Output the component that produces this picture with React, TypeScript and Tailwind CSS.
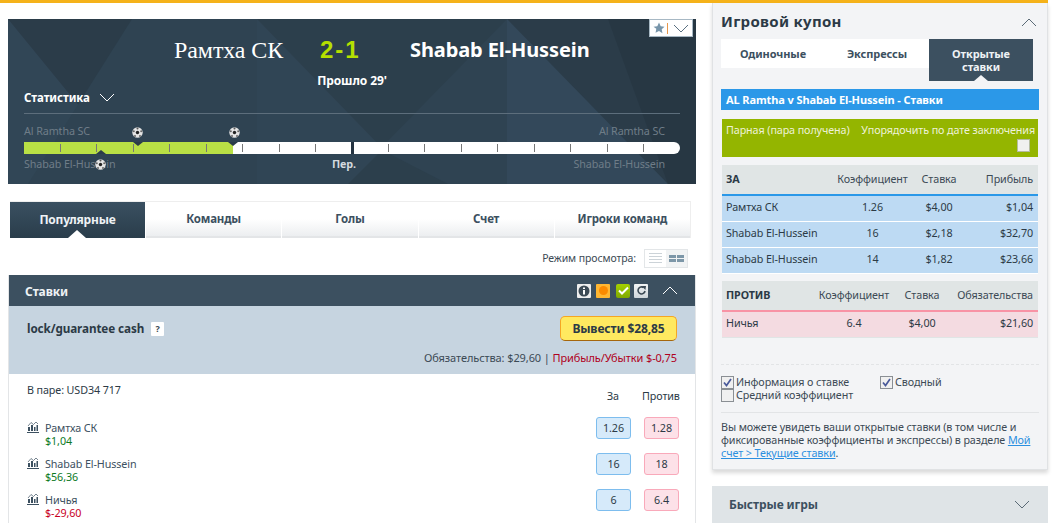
import React from 'react';

const ticks = [52, 88, 125, 161, 198, 234, 271, 307, 380, 416, 453, 489, 526, 562, 599, 635];

const Chevron: React.FC<{ up?: boolean; className?: string }> = ({ up, className }) => (
  <svg width="16" height="9" viewBox="0 0 16 9" fill="none" className={className}>
    <path d={up ? 'M1 8 L8 1 L15 8' : 'M1 1 L8 8 L15 1'} stroke="currentColor" strokeWidth="1" />
  </svg>
);

const Ball: React.FC<{ className: string }> = ({ className }) => (
  <svg width="11" height="11" viewBox="0 0 11 11" className={`absolute ${className}`}>
    <circle cx="5.5" cy="5.5" r="5.2" fill="#e4e4e4" />
    <circle cx="5.5" cy="5.5" r="1.7" fill="#222" />
    <circle cx="5.5" cy="1.5" r="1" fill="#555" />
    <circle cx="1.8" cy="4.2" r="1" fill="#666" />
    <circle cx="9.2" cy="4.2" r="1" fill="#666" />
    <circle cx="3" cy="9" r="1" fill="#666" />
    <circle cx="8" cy="9" r="1" fill="#666" />
  </svg>
);

const BarsIcon: React.FC = () => (
  <svg width="12" height="12" viewBox="0 0 12 12" className="-mt-[1px] shrink-0 text-[#3c5060]">
    <path d="M1 5 L4 1.5 L6.5 3.5 L9 1 L11 3" fill="none" stroke="currentColor" strokeWidth="0.7" />
    <path d="M1 6h2v4H1zM4 4h2v6H4zM7 6h1.5v4H7zM9.5 4H11v6H9.5z" fill="currentColor" />
    <path d="M0 11.5h12" stroke="currentColor" strokeWidth="1" />
  </svg>
);

const Market: React.FC<{ name: string; value: string; red?: boolean; back: string; lay: string }> = ({ name, value, red, back, lay }) => (
  <div className="flex h-[36px] items-start">
    <div className="ml-[18px] flex w-[569px] gap-[6px]">
      <BarsIcon />
      <div className="leading-[13px]">
        <div className="text-[#3c5060]">{name}</div>
        <div className={red ? 'text-[#c8001e]' : 'text-[#0d7a1f]'}>{value}</div>
      </div>
    </div>
    <div className="-mt-[5px] flex h-[22px] w-[35px] items-center justify-center rounded-[3px] border border-[#7dbdee] bg-[#d6eafa] text-[#2c3a46]">{back}</div>
    <div className="-mt-[5px] ml-[13px] flex h-[22px] w-[35px] items-center justify-center rounded-[3px] border border-[#f9a9ba] bg-[#fde1e8] text-[#2c3a46]">{lay}</div>
  </div>
);

const BetRow: React.FC<{ name: string; odds: string; stake: string; profit: string }> = ({ name, odds, stake, profit }) => (
  <div className="grid h-[26px] grid-cols-[109px_75px_58px_1fr] items-center border-b border-white bg-[#bddaf3] pb-[3px] pl-[4px] pr-[5px] text-[#2c3a46]">
    <span>{name}</span>
    <span className="text-center">{odds}</span>
    <span className="text-center">{stake}</span>
    <span className="text-right">{profit}</span>
  </div>
);

const CheckBox: React.FC<{ checked?: boolean }> = ({ checked }) => (
  <span className="flex h-[13px] w-[13px] shrink-0 items-center justify-center border border-[#8a8f94] bg-[#f0f0f0]">
    {checked && (
      <svg width="9" height="9" viewBox="0 0 9 9">
        <path d="M1 4.5 L3.5 7.5 L8 1" fill="none" stroke="#4a5a9a" strokeWidth="1.7" />
      </svg>
    )}
  </span>
);

export default function App() {
  return (
    <div className="h-[523px] w-[1062px] overflow-hidden bg-white font-['Noto_Sans',sans-serif] text-[10.75px] leading-[13px] tracking-[-0.1px]">
      <div className="h-[3px] w-[1048px] bg-[#f5b21a]" />
      <div className="flex">
        {/* Left column */}
        <div className="ml-[8px] w-[688px]">
          {/* Match header */}
          <div className="relative mt-[16px] h-[165px] overflow-hidden bg-[#2b3c49]">
            <svg className="absolute inset-0" width="688" height="165" viewBox="0 0 688 165">
              <polygon points="0,0 135,165 0,165" fill="#33495a" opacity="0.8" />
              <polygon points="124,0 249,0 249,165 100,165 20,165" fill="#2f4352" />
              <polygon points="249,0 375,130 340,165 249,165" fill="#33485a" />
              <polygon points="249,0 499,0 499,165 249,165" fill="#2e4150" opacity="0.5" />
              <polygon points="499,0 372,130 440,165 499,165" fill="#2f4352" />
              <polygon points="499,0 660,165 499,165" fill="#33485a" />
              <polygon points="600,0 688,0 688,165 660,165" fill="#273743" />
            </svg>
            <div className="absolute right-[3px] top-0 flex h-[18px] w-[44px] items-center border border-[#a7b8c4] bg-white pl-[3px]">
              <svg width="12" height="12" viewBox="0 0 24 24" fill="#7795aa">
                <path d="M12 1l3.4 7.3 7.6 1-5.6 5.3 1.5 7.9L12 18l-6.9 3.5 1.5-7.9L1 9.3l7.6-1z" />
              </svg>
              <span className="ml-[2px] h-[11px] w-px bg-[#e8974a]" />
              <Chevron className="ml-[5px] text-[#5a7081]" />
            </div>
            <div className="relative flex h-[55px] items-start pt-[17px]">
              <span className="ml-[166px] w-[146px] font-['Liberation_Serif',serif] text-[24px] leading-[28px] text-white">Рамтха СК</span>
              <span className="w-[90px] font-['Liberation_Sans',sans-serif] text-[24px] font-bold leading-[28px] tracking-[2px] text-[#b5e000]">2-1</span>
              <span className="text-[20px] font-bold leading-[28px] text-white">Shabab El-Hussein</span>
            </div>
            <div className="relative text-center text-[12px] font-bold text-white">Прошло 29'</div>
            <div className="relative ml-[16px] mt-[4px] flex h-[13px] items-center gap-[9px] text-[11.5px] font-bold text-white">
              Статистика
              <Chevron className="text-white" />
            </div>
            <div className="relative mx-[16px] mt-[9px] h-px bg-[#5d6e7c]" />
            <div className="relative mx-[16px] mt-[11px] flex justify-between text-[#6f7d88]">
              <span>Al Ramtha SC</span>
              <span className="mr-[15px]">Al Ramtha SC</span>
            </div>
            {/* Timeline */}
            <div className="relative mx-[16px] mt-[4px] h-[12px] rounded-r-[6px] bg-white">
              <div className="absolute inset-y-0 left-0 w-[209px] bg-[#b9e045]" />
              {ticks.map(x => (
                <div key={x} className="absolute top-[2px] h-[8px] w-px bg-[#777]" style={{ left: x - 16 }} />
              ))}
              <div className="absolute inset-y-0 left-[327px] w-[3px] bg-[#243341]" />
              <div className="absolute left-[109px] top-0 h-0 w-0 border-x-[5px] border-t-[4px] border-x-transparent border-t-[#2b3c49]" />
              <div className="absolute left-[204px] top-0 h-0 w-0 border-x-[5px] border-t-[4px] border-x-transparent border-t-[#2b3c49]" />
              <div className="absolute bottom-0 left-[72px] h-0 w-0 border-x-[5px] border-b-[4px] border-x-transparent border-b-[#2b3c49]" />
            </div>
            <div className="relative mx-[16px] mt-[4px] flex text-[#6f7d88]">
              <span className="w-[308px]">Shabab El-Hussein</span>
              <span className="font-bold text-[#d5dadf]">Пер.</span>
              <span className="ml-auto mr-[15px]">Shabab El-Hussein</span>
            </div>
            <Ball className="left-[124px] top-[108px]" />
            <Ball className="left-[221px] top-[108px]" />
            <Ball className="left-[87px] top-[140px]" />
          </div>

          {/* Tabs */}
          <div className="ml-[2px] mt-[17px] flex h-[37px] w-[681px] gap-px border-r border-t border-[#eeeeee] text-[11.5px] font-bold tracking-[-0.2px] text-[#3c5060]">
            <div className="relative flex w-[135px] items-center justify-center bg-gradient-to-b from-[#3a5061] to-[#2a3d4b] pb-[2px] text-[12px] text-[#eef2f5]">
              Популярные
              <div className="absolute bottom-0 left-[58px] h-0 w-0 border-x-[9px] border-b-[8px] border-x-transparent border-b-white" />
            </div>
            {['Команды', 'Голы', 'Счет', 'Игроки команд'].map(t => (
              <div key={t} className="flex flex-1 items-center justify-center border-b-2 border-[#e3e5e7] bg-gradient-to-b from-white from-50% to-[#eceef0] pb-[2px]">
                {t}
              </div>
            ))}
          </div>

          {/* View mode */}
          <div className="mt-[10px] flex h-[20px] items-center justify-end pr-[8px] text-[10.5px] text-[#3c4a55]">
            Режим просмотра:
            <div className="ml-[8px] flex h-[19px] w-[44px] border border-[#e3e6e8]">
              <div className="flex flex-1 flex-col items-center justify-center gap-[2px]">
                <span className="h-px w-[13px] bg-[#ccd3d8]" />
                <span className="h-px w-[13px] bg-[#ccd3d8]" />
                <span className="h-px w-[13px] bg-[#ccd3d8]" />
                <span className="h-px w-[13px] bg-[#ccd3d8]" />
              </div>
              <div className="grid flex-1 grid-cols-[7px_7px] content-center justify-center gap-[1px] bg-[#f1f3f4]">
                <span className="h-[3px] bg-[#7d97a8]" />
                <span className="h-[3px] bg-[#7d97a8]" />
                <span className="h-[3px] bg-[#7d97a8]" />
                <span className="h-[3px] bg-[#7d97a8]" />
              </div>
            </div>
          </div>

          {/* Bets section */}
          <div className="mt-[7px] border-x border-[#e3e5e7]">
            <div className="flex h-[31px] items-center bg-[#3c5060] pl-[16px] pr-[17px] text-[12px] font-bold text-[#eef2f5]">
              <span className="pt-[1px]">Ставки</span>
              <span className="ml-auto flex h-[14px] w-[14px] items-center justify-center rounded-[1px] bg-[#eeeeee]">
                <svg width="12" height="12" viewBox="0 0 12 12">
                  <circle cx="6" cy="6" r="5.5" fill="#3c4a55" />
                  <path d="M5 2.5h2v1.6H5zM5 5h2v4.5H5z" fill="#fff" />
                </svg>
              </span>
              <span className="ml-[5px] flex h-[14px] w-[14px] items-center justify-center rounded-[1px] bg-[#ffb732]">
                <span className="h-[9px] w-[9px] rounded-full bg-[#fb8a00]" />
              </span>
              <span className="ml-[6px] flex h-[14px] w-[14px] items-center justify-center rounded-[2px] bg-gradient-to-b from-[#a6d000] to-[#7fa800]">
                <svg width="11" height="9" viewBox="0 0 11 9">
                  <path d="M1 4.5 L4 7.5 L10 1.5" fill="none" stroke="#fff" strokeWidth="2" />
                </svg>
              </span>
              <span className="ml-[4px] flex h-[14px] w-[14px] items-center justify-center rounded-[1px] bg-gradient-to-b from-[#f2f4f5] to-[#cfd6da]">
                <svg width="11" height="11" viewBox="0 0 11 11">
                  <path d="M7.6 2.6 A3.5 3.5 0 1 0 9 6" fill="none" stroke="#3c4a55" strokeWidth="1.6" />
                  <path d="M5.8 1 L10 1 L9.4 5 z" fill="#3c4a55" />
                </svg>
              </span>
              <Chevron up className="ml-[14px] text-white" />
            </div>
            <div className="h-[68px] bg-[#c6d4e0] pl-[18px] pr-[18px]">
              <div className="flex h-[45px] items-center">
                <span className="text-[11.7px] font-bold text-[#2c3a46]">lock/guarantee cash</span>
                <span className="ml-[7px] flex h-[14px] w-[13px] items-center justify-center rounded-[1px] bg-white text-[9px] font-bold text-[#3c4a55]">?</span>
                <button className="ml-auto flex h-[25px] w-[117px] items-center justify-center rounded-[5px] border border-[#f5a623] border-b-[#a5660d] bg-[#ffe960] text-[12px] font-bold text-[#2c3a46]">
                  Вывести $28,85
                </button>
              </div>
              <div className="text-right text-[11px] text-[#3c4a55]">
                Обязательства: $29,60 | <span className="text-[#b00020]">Прибыль/Убытки $-0,75</span>
              </div>
            </div>
            <div className="h-[149px] bg-white">
              <div className="flex h-[28px] text-[#2c3a46]">
                <span className="ml-[18px] w-[577px] pt-[10px]">В паре: USD34 717</span>
                <span className="w-[18px] pt-[16px] text-center">За</span>
                <span className="ml-[20px] pt-[16px]">Против</span>
              </div>
              <div className="mt-[20px]">
                <Market name="Рамтха СК" value="$1,04" back="1.26" lay="1.28" />
                <Market name="Shabab El-Hussein" value="$56,36" back="16" lay="18" />
                <Market name="Ничья" value="$-29,60" red back="6" lay="6.4" />
              </div>
            </div>
          </div>
        </div>

        {/* Bet slip */}
        <div className="ml-[16px] w-[336px]">
          <div className="h-[467px] border-x border-b border-[#e0e2e4] bg-[#f3f4f6] pl-[8px] pr-[8px] shadow-[0_3px_4px_rgba(0,0,0,0.15)]">
            <div className="flex h-[36px] items-center justify-between pr-[2px] pt-[2px]">
              <span className="-mt-[1px] text-[15px] font-bold tracking-[0.3px] text-[#2c3a46]">Игровой купон</span>
              <Chevron up className="text-[#5a6a76]" />
            </div>
            <div className="flex h-[42px] items-start text-[11px] font-bold text-[#3c5060]">
              <div className="flex h-[29px] w-[104px] items-center justify-center bg-white">Одиночные</div>
              <div className="flex h-[29px] w-[104px] items-center justify-center bg-white">Экспрессы</div>
              <div className="relative flex h-[42px] w-[104px] items-center justify-center bg-[#3c5060] text-center text-[#eef2f5]">
                Открытые
                <br />
                ставки
                <div className="absolute bottom-0 left-[45px] h-0 w-0 border-x-[7px] border-b-[6px] border-x-transparent border-b-[#f3f4f6]" />
              </div>
            </div>
            <div className="mt-[8px] flex h-[21px] w-[318px] items-center bg-[#2b98e8] pl-[5px] text-[11px] font-bold text-white">AL Ramtha v Shabab El-Hussein - Ставки</div>
            <div className="ml-[1px] mt-[9px] h-[38px] w-[316px] bg-[#94b500] px-[4px] pt-[5px] text-[#eef2d8]">
              <div className="flex justify-between whitespace-nowrap">
                <span>Парная (пара получена)</span>
                <span className="-mr-[1px]">Упорядочить по дате заключения</span>
              </div>
              <div className="ml-auto mr-[4px] mt-[2px] h-[13px] w-[13px] border border-[#b5bca0] bg-[#f0f0f0]" />
            </div>
            <div className="ml-[1px] mt-[8px] w-[316px]">
              <div className="grid h-[31px] grid-cols-[109px_75px_58px_1fr] items-center border-b-[2px] border-[#2b98e8] bg-[#e0e5e5] pl-[4px] pr-[5px] text-[#3c4a55]">
                <span className="font-bold text-[#2c3a46]">ЗА</span>
                <span className="text-center">Коэффициент</span>
                <span className="text-center">Ставка</span>
                <span className="text-right">Прибыль</span>
              </div>
              <BetRow name="Рамтха СК" odds="1.26" stake="$4,00" profit="$1,04" />
              <BetRow name="Shabab El-Hussein" odds="16" stake="$2,18" profit="$32,70" />
              <BetRow name="Shabab El-Hussein" odds="14" stake="$1,82" profit="$23,66" />
              <div className="mt-[7px] grid h-[31px] grid-cols-[90px_76px_60px_1fr] items-center border-b-[2px] border-[#f893a5] bg-[#e0e5e5] pb-[1px] pl-[4px] pr-[5px] text-[#3c4a55]">
                <span className="font-bold text-[#2c3a46]">ПРОТИВ</span>
                <span className="text-center">Коэффициент</span>
                <span className="text-center">Ставка</span>
                <span className="text-right">Обязательства</span>
              </div>
              <div className="grid h-[26px] grid-cols-[90px_76px_60px_1fr] items-center border-b border-[#e0e5e5] bg-[#f4dbe1] pb-[3px] pl-[4px] pr-[5px] text-[#2c3a46]">
                <span>Ничья</span>
                <span className="text-center">6.4</span>
                <span className="text-center">$4,00</span>
                <span className="text-right">$21,60</span>
              </div>
            </div>
            <div className="mt-[26px] border-t border-dashed border-[#e2e4e6]" />
            <div className="mt-[11px] grid grid-cols-[159px_1fr] text-[#3c4a55]">
              <div className="flex items-center gap-[2px]"><CheckBox checked />Информация о ставке</div>
              <div className="flex items-center gap-[2px]"><CheckBox checked />Сводный</div>
              <div className="col-span-2 flex items-center gap-[2px]"><CheckBox />Средний коэффициент</div>
            </div>
            <div className="mt-[10px] border-t border-[#e2e4e6]" />
            <p className="mt-[8px] text-[#3c4a55]">
              Вы можете увидеть ваши открытые ставки (в том числе и фиксированные коэффициенты и экспрессы) в разделе{' '}
              <a className="text-[#2b8fe0] underline">Мой</a>{' '}
              <a className="text-[#2b8fe0] underline">счет &gt; Текущие ставки</a>.
            </p>
          </div>
          <div className="mt-[16px] flex h-[37px] items-center justify-between bg-[#dfe4e7] pl-[17px] pr-[18px] text-[12px] font-bold text-[#3c5060]">
            Быстрые игры
            <Chevron className="text-[#5a6a76]" />
          </div>
        </div>
      </div>
    </div>
  );
}
